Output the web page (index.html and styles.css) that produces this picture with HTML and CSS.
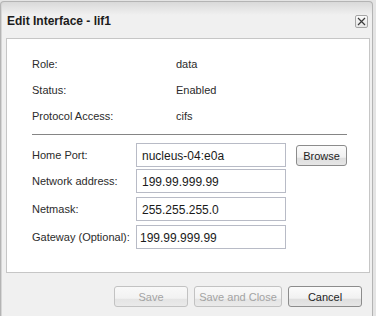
FILE: index.html
```html
<!DOCTYPE html>
<html lang="en">
<head>
    <meta charset="UTF-8">
    <title>Edit Interface - lif1</title>
    <link rel="stylesheet" href="styles.css">
</head>
<body>
    <div class="window">
        <div class="titlebar">
            <span class="title">Edit Interface - lif1</span>
            <button class="close" title="Close">
                <svg width="9" height="9" viewBox="0 0 9 9">
                    <path d="M1 1 L8 8 M8 1 L1 8" stroke="#3a3a3a" stroke-width="1.2" fill="none"/>
                </svg>
            </button>
        </div>
        <div class="panel">
            <div class="info-row"><span class="info-label">Role:</span><span>data</span></div>
            <div class="info-row"><span class="info-label">Status:</span><span>Enabled</span></div>
            <div class="info-row"><span class="info-label">Protocol Access:</span><span>cifs</span></div>
            <hr class="sep">
            <div class="form-row first">
                <label for="port">Home Port:</label>
                <input type="text" id="port" value="nucleus-04:e0a">
                <button class="btn browse">Browse</button>
            </div>
            <div class="form-row">
                <label for="addr">Network address:</label>
                <input type="text" id="addr" value="199.99.999.99">
            </div>
            <div class="form-row">
                <label for="mask">Netmask:</label>
                <input type="text" id="mask" value="255.255.255.0">
            </div>
            <div class="form-row">
                <label for="gw">Gateway (Optional):</label>
                <input type="text" id="gw" class="tight" value="199.99.999.99">
            </div>
        </div>
        <div class="actions">
            <button class="btn" disabled>Save</button>
            <button class="btn wide" disabled>Save and Close</button>
            <button class="btn">Cancel</button>
        </div>
    </div>
</body>
</html>
```

FILE: styles.css
```css
html, body {
    margin: 0;
    height: 100%;
    overflow: hidden;
}
body {
    font-family: 'Liberation Sans', Arial, sans-serif;
    font-size: 11px;
    color: #2b2b2b;
    background: #e4e4e4;
}
.window {
    width: 371px;
    height: 314px;
    margin-top: 1px;
    border: 1px solid #b4b4b4;
    border-bottom: none;
    border-radius: 4px 4px 0 0;
    background: linear-gradient(#d9d9d9, #f0f0f0 13px);
    box-shadow: inset 1px 0 0 #d6d6d6;
}
.titlebar {
    display: flex;
    align-items: center;
    justify-content: space-between;
    height: 36px;
    padding: 0 4px 0 6px;
}
.title {
    font-size: 12px;
    font-weight: bold;
    color: #1c1c1c;
    margin-top: 2px;
}
.close {
    display: flex;
    align-items: center;
    justify-content: center;
    width: 13px;
    height: 13px;
    padding: 0;
    border: 1px solid #a6a6a6;
    border-radius: 2px;
    background: linear-gradient(#fafafa, #e6e6e6);
    margin-top: 2px;
}
.panel {
    height: 220px;
    margin: 0 2px 0 5px;
    padding: 13px 22px 0 25px;
    border: 1px solid #c6c6c6;
    background: #fff;
}
.info-row {
    display: flex;
    height: 26px;
    line-height: 25px;
}
.info-label {
    width: 144px;
}
.sep {
    margin: 4px 0 8px;
    border: none;
    border-top: 1px solid #858585;
}
.form-row {
    display: flex;
    align-items: center;
    margin-bottom: 4px;
}
.form-row.first {
    margin-bottom: 2px;
}
.form-row label {
    width: 104px;
}
.form-row input {
    box-sizing: border-box;
    width: 150px;
    height: 24px;
    padding: 1px 5px 0;
    border: 1px solid #b8bbc6;
    font-family: 'Liberation Sans', Arial, sans-serif;
    font-size: 12px;
    color: #1a1a1a;
}
.form-row input.tight {
    padding-left: 3px;
}
.btn {
    box-sizing: border-box;
    width: 74px;
    height: 21px;
    padding: 0;
    border: 1px solid #8c8c8c;
    border-radius: 3px;
    background: linear-gradient(#fbfbfb, #f1f1f1 60%, #dedede 62%, #e6e6e6);
    font-family: 'Liberation Sans', Arial, sans-serif;
    font-size: 11px;
    color: #1e1e1e;
}
.btn:disabled {
    border-color: #c2c2c2;
    color: #a3a3a3;
    background: linear-gradient(#f8f8f8, #f2f2f2 60%, #e4e4e4 62%, #eaeaea);
}
.browse {
    width: 51px;
    height: 21px;
    margin-left: 10px;
    margin-top: 1px;
}
.wide {
    width: 88px;
}
.actions {
    display: flex;
    justify-content: flex-end;
    gap: 6px;
    padding: 13px 10px 0 0;
}
```
